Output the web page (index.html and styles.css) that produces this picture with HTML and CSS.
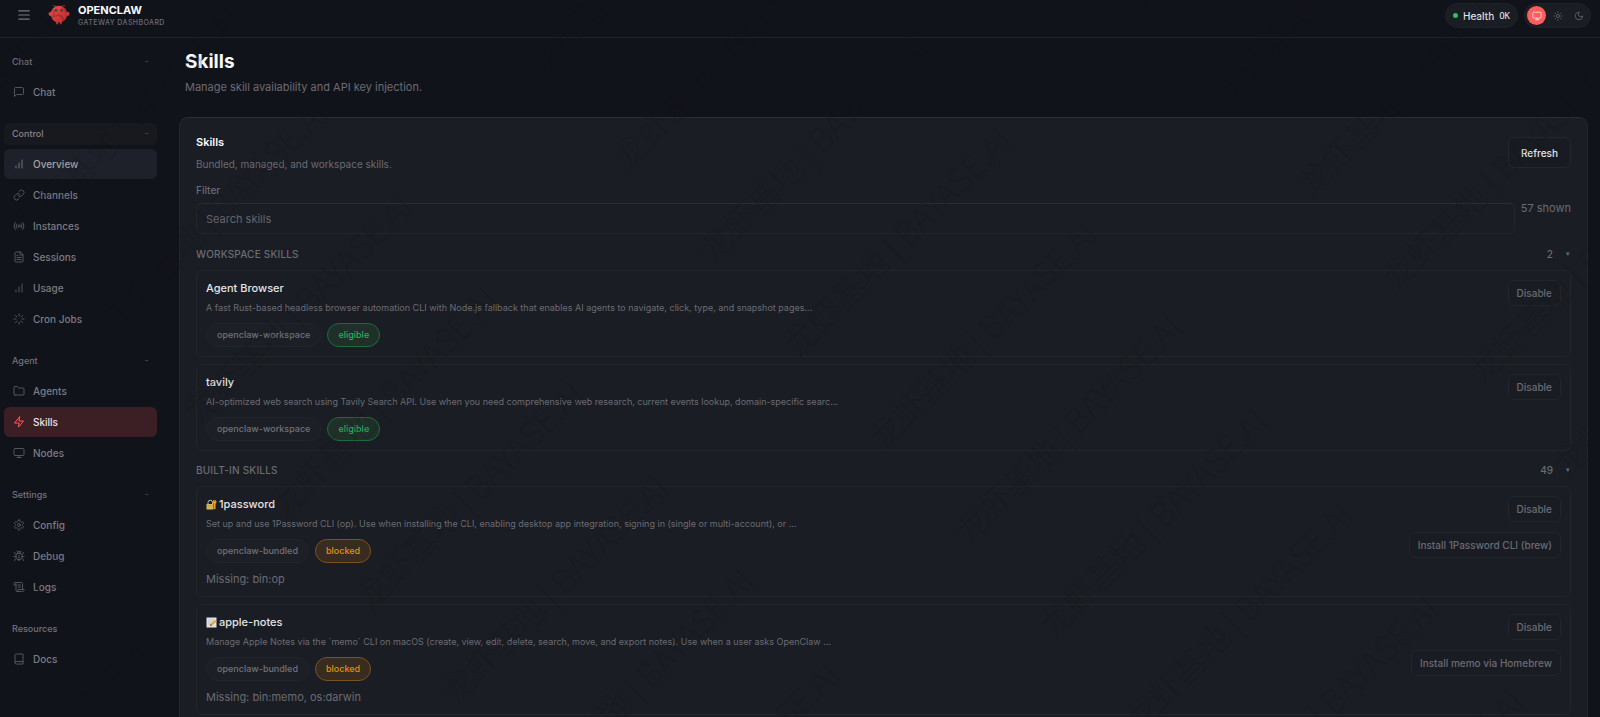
FILE: index.html
```html
<!DOCTYPE html>
<html lang="en">
<head>
<meta charset="utf-8">
<meta name="viewport" content="width=device-width, initial-scale=1">
<title>OpenClaw Gateway Dashboard</title>
<link rel="stylesheet" href="styles.css">
</head>
<body>
<div class="shell">
  <header class="topbar">
    <button class="menu-btn" type="button" aria-label="Toggle menu">
      <svg class="icon" viewBox="0 0 24 24"><path d="M3 5h18M3 12h18M3 19h18"/></svg>
    </button>
    <div class="brand">
      <svg class="brand-logo" viewBox="0 0 120 120" aria-hidden="true">
        <defs><linearGradient id="body" x1="0" y1="0" x2="1" y2="1"><stop offset="0" stop-color="#f04a4a"/><stop offset="1" stop-color="#b52828"/></linearGradient></defs>
        <path fill="url(#body)" d="M60 10C30 10 15 35 15 55s15 40 30 45v10h10v-10s5 2 10 0v10h10v-10c15-5 30-25 30-45S90 10 60 10z"/>
        <path fill="#dc3f3f" d="M20 45C5 40 0 50 5 60s15 5 20-5c3-7 0-10-5-10zM100 45c15-5 20 5 15 15s-15 5-20-5c-3-7 0-10 5-10z"/>
        <path d="M45 15Q35 5 30 8M75 15Q85 5 90 8" stroke="#e04444" stroke-width="4" fill="none" stroke-linecap="round"/>
        <circle cx="45" cy="35" r="6" fill="#10131a"/><circle cx="75" cy="35" r="6" fill="#10131a"/>
        <circle cx="46" cy="34" r="3" fill="#1fb6a6"/><circle cx="76" cy="34" r="3" fill="#1fb6a6"/>
      </svg>
      <div class="brand-text">
        <div class="brand-title">OPENCLAW</div>
        <div class="brand-sub">GATEWAY DASHBOARD</div>
      </div>
    </div>
    <div class="status">
      <div class="health"><span class="dot"></span><span>Health</span><span class="mono">OK</span></div>
      <div class="theme">
        <button class="theme-btn active" type="button" aria-label="System theme"><svg class="icon" viewBox="0 0 24 24"><rect x="2" y="3" width="20" height="14" rx="2"/><path d="M8 21h8M12 17v4"/></svg></button>
        <button class="theme-btn" type="button" aria-label="Light theme"><svg class="icon" viewBox="0 0 24 24"><circle cx="12" cy="12" r="4"/><path d="M12 2v2M12 20v2M4.9 4.9l1.4 1.4M17.7 17.7l1.4 1.4M2 12h2M20 12h2M6.3 17.7l-1.4 1.4M19.1 4.9l-1.4 1.4"/></svg></button>
        <button class="theme-btn" type="button" aria-label="Dark theme"><svg class="icon" viewBox="0 0 24 24"><path d="M12 3a6 6 0 0 0 9 9 9 9 0 1 1-9-9z"/></svg></button>
      </div>
    </div>
  </header>

  <nav class="nav">
    <section class="nav-group">
      <button class="nav-label" type="button"><span>Chat</span><span class="nav-dash">−</span></button>
      <a class="nav-item" href="#chat"><svg class="icon" viewBox="0 0 24 24"><path d="M21 15a2 2 0 0 1-2 2H7l-4 4V5a2 2 0 0 1 2-2h14a2 2 0 0 1 2 2z"/></svg>Chat</a>
    </section>
    <section class="nav-group">
      <button class="nav-label hover" type="button"><span>Control</span><span class="nav-dash">−</span></button>
      <a class="nav-item hover" href="#overview"><svg class="icon" viewBox="0 0 24 24"><path d="M12 20V10M18 20V4M6 20v-4"/></svg>Overview</a>
      <a class="nav-item" href="#channels"><svg class="icon" viewBox="0 0 24 24"><path d="M10 13a5 5 0 0 0 7.54.54l3-3a5 5 0 0 0-7.07-7.07l-1.72 1.71"/><path d="M14 11a5 5 0 0 0-7.54-.54l-3 3a5 5 0 0 0 7.07 7.07l1.71-1.71"/></svg>Channels</a>
      <a class="nav-item" href="#instances"><svg class="icon" viewBox="0 0 24 24"><circle cx="12" cy="12" r="2"/><path d="M16.24 7.76a6 6 0 0 1 0 8.49M7.76 16.24a6 6 0 0 1 0-8.49M19.07 4.93a10 10 0 0 1 0 14.14M4.93 19.07a10 10 0 0 1 0-14.14"/></svg>Instances</a>
      <a class="nav-item" href="#sessions"><svg class="icon" viewBox="0 0 24 24"><path d="M14.5 2H6a2 2 0 0 0-2 2v16a2 2 0 0 0 2 2h12a2 2 0 0 0 2-2V7.5z"/><path d="M14 2v6h6M16 13H8M16 17H8M10 9H8"/></svg>Sessions</a>
      <a class="nav-item" href="#usage"><svg class="icon" viewBox="0 0 24 24"><path d="M12 20V10M18 20V4M6 20v-4"/></svg>Usage</a>
      <a class="nav-item" href="#cron"><svg class="icon" viewBox="0 0 24 24"><path d="M12 2v4M12 18v4M4.93 4.93l2.83 2.83M16.24 16.24l2.83 2.83M2 12h4M18 12h4M4.93 19.07l2.83-2.83M16.24 7.76l2.83-2.83"/></svg>Cron Jobs</a>
    </section>
    <section class="nav-group">
      <button class="nav-label" type="button"><span>Agent</span><span class="nav-dash">−</span></button>
      <a class="nav-item" href="#agents"><svg class="icon" viewBox="0 0 24 24"><path d="M4 20h16a2 2 0 0 0 2-2V8a2 2 0 0 0-2-2h-7.93a2 2 0 0 1-1.66-.9l-.82-1.2A2 2 0 0 0 7.93 3H4a2 2 0 0 0-2 2v13a2 2 0 0 0 2 2z"/></svg>Agents</a>
      <a class="nav-item active" href="#skills"><svg class="icon" viewBox="0 0 24 24"><path d="M13 2 3 14h9l-1 8 10-12h-9l1-8z"/></svg>Skills</a>
      <a class="nav-item" href="#nodes"><svg class="icon" viewBox="0 0 24 24"><rect x="2" y="3" width="20" height="14" rx="2"/><path d="M8 21h8M12 17v4"/></svg>Nodes</a>
    </section>
    <section class="nav-group">
      <button class="nav-label" type="button"><span>Settings</span><span class="nav-dash">−</span></button>
      <a class="nav-item" href="#config"><svg class="icon" viewBox="0 0 24 24"><path d="M12.22 2h-.44a2 2 0 0 0-2 2v.18a2 2 0 0 1-1 1.73l-.43.25a2 2 0 0 1-2 0l-.15-.08a2 2 0 0 0-2.73.73l-.22.38a2 2 0 0 0 .73 2.73l.15.1a2 2 0 0 1 1 1.72v.51a2 2 0 0 1-1 1.74l-.15.09a2 2 0 0 0-.73 2.73l.22.38a2 2 0 0 0 2.73.73l.15-.08a2 2 0 0 1 2 0l.43.25a2 2 0 0 1 1 1.73V20a2 2 0 0 0 2 2h.44a2 2 0 0 0 2-2v-.18a2 2 0 0 1 1-1.73l.43-.25a2 2 0 0 1 2 0l.15.08a2 2 0 0 0 2.73-.73l.22-.39a2 2 0 0 0-.73-2.73l-.15-.08a2 2 0 0 1-1-1.74v-.5a2 2 0 0 1 1-1.74l.15-.09a2 2 0 0 0 .73-2.73l-.22-.38a2 2 0 0 0-2.73-.73l-.15.08a2 2 0 0 1-2 0l-.43-.25a2 2 0 0 1-1-1.73V4a2 2 0 0 0-2-2z"/><circle cx="12" cy="12" r="3"/></svg>Config</a>
      <a class="nav-item" href="#debug"><svg class="icon" viewBox="0 0 24 24"><path d="m8 2 1.88 1.88M14.12 3.88 16 2M9 7.13v-1a3 3 0 1 1 6 0v1"/><path d="M12 20c-3.3 0-6-2.7-6-6v-3a4 4 0 0 1 4-4h4a4 4 0 0 1 4 4v3c0 3.3-2.7 6-6 6zM12 20v-9M6.53 9C4.6 8.8 3 7.1 3 5M6 13H2M3 21c0-2.1 1.7-3.9 3.8-4M20.97 5c0 2.1-1.6 3.8-3.5 4M22 13h-4M17.2 17c2.1.1 3.8 1.9 3.8 4"/></svg>Debug</a>
      <a class="nav-item" href="#logs"><svg class="icon" viewBox="0 0 24 24"><path d="M8 21h12a2 2 0 0 0 2-2v-2H10v2a2 2 0 1 1-4 0V5a2 2 0 1 0-4 0v3h4"/><path d="M19 17V5a2 2 0 0 0-2-2H4M15 8h-5M15 12h-5"/></svg>Logs</a>
    </section>
    <section class="nav-group">
      <div class="nav-label"><span>Resources</span></div>
      <a class="nav-item" href="#docs"><svg class="icon" viewBox="0 0 24 24"><path d="M4 19.5v-15A2.5 2.5 0 0 1 6.5 2H20v20H6.5a2.5 2.5 0 0 1 0-5H20"/></svg>Docs</a>
    </section>
  </nav>

  <main class="content">
    <div class="page-head">
      <h1>Skills</h1>
      <p>Manage skill availability and API key injection.</p>
    </div>
    <section class="card">
      <div class="card-head">
        <div>
          <h2>Skills</h2>
          <p>Bundled, managed, and workspace skills.</p>
        </div>
        <button class="btn" type="button">Refresh</button>
      </div>
      <div class="filters">
        <label class="field"><span>Filter</span><input type="text" placeholder="Search skills"></label>
        <span class="count">57 shown</span>
      </div>

      <details class="group" open>
        <summary><span class="group-name">WORKSPACE SKILLS</span><span>2</span><span class="caret">▾</span></summary>
        <div class="list">
          <article class="item">
            <div class="item-main">
              <h3>Agent Browser</h3>
              <p class="desc">A fast Rust-based headless browser automation CLI with Node.js fallback that enables AI agents to navigate, click, type, and snapshot pages…</p>
              <div class="chips"><span class="chip">openclaw-workspace</span><span class="chip ok">eligible</span></div>
            </div>
            <div class="actions"><button class="btn small" type="button">Disable</button></div>
          </article>
          <article class="item">
            <div class="item-main">
              <h3>tavily</h3>
              <p class="desc">AI-optimized web search using Tavily Search API. Use when you need comprehensive web research, current events lookup, domain-specific searc…</p>
              <div class="chips"><span class="chip">openclaw-workspace</span><span class="chip ok">eligible</span></div>
            </div>
            <div class="actions"><button class="btn small" type="button">Disable</button></div>
          </article>
        </div>
      </details>

      <details class="group" open>
        <summary><span class="group-name">BUILT-IN SKILLS</span><span>49</span><span class="caret">▾</span></summary>
        <div class="list">
          <article class="item">
            <div class="item-main">
              <h3><svg class="emoji" viewBox="0 0 22 22" aria-hidden="true"><path d="M4 11V7a4 4 0 0 1 9 0v4" fill="none" stroke="#b9bcc0" stroke-width="2"/><rect x="1" y="10" width="14" height="11" rx="1" fill="#d9b860"/><path d="M1 13h14M1 16h14" stroke="#b5934a"/><circle cx="17" cy="6" r="4" fill="#f5a01d"/><circle cx="17" cy="4" r="1" fill="#4a3208"/><path d="M16 9h3v11l-2 1-1-2z" fill="#f5a01d"/></svg>1password</h3>
              <p class="desc">Set up and use 1Password CLI (op). Use when installing the CLI, enabling desktop app integration, signing in (single or multi-account), or …</p>
              <div class="chips"><span class="chip">openclaw-bundled</span><span class="chip warn">blocked</span></div>
              <p class="missing">Missing: bin:op</p>
            </div>
            <div class="actions"><button class="btn small" type="button">Disable</button><button class="btn small" type="button">Install 1Password CLI (brew)</button></div>
          </article>
          <article class="item">
            <div class="item-main">
              <h3><svg class="emoji" viewBox="0 0 22 22" aria-hidden="true"><path d="M1 1h20v20H1z" fill="#dfe1e4"/><path d="M4 6h13M4 10h9M4 14h6" stroke="#a8acb2"/><path d="M8 18l1-4L18 6l3 3-9 8z" fill="#f0a030"/><path d="M8 18l1-4 3 3z" fill="#6b5237"/></svg>apple-notes</h3>
              <p class="desc">Manage Apple Notes via the `memo` CLI on macOS (create, view, edit, delete, search, move, and export notes). Use when a user asks OpenClaw …</p>
              <div class="chips"><span class="chip">openclaw-bundled</span><span class="chip warn">blocked</span></div>
              <p class="missing">Missing: bin:memo, os:darwin</p>
            </div>
            <div class="actions"><button class="btn small" type="button">Disable</button><button class="btn small" type="button">Install memo via Homebrew</button></div>
          </article>
        </div>
      </details>
    </section>
  </main>
</div>
<svg class="watermark" id="watermark" aria-hidden="true"></svg>
<script src="watermark.js"></script>
</body>
</html>
```
FILE: watermark.js
```js
// Tiles the diagonal watermark over the whole window on a slanted grid.
const layer = document.getElementById("watermark");
const NS = "http://www.w3.org/2000/svg";
const origin = { x: 29, y: 238 };
for (let col = -1; col < 4; col++) {
  for (let row = -26; row < 16; row++) {
    const x = origin.x + col * 684 + row * 85.3;
    const y = origin.y + col * 27 + row * 93.6;
    if (x < -220 || x > innerWidth || y < 0 || y > innerHeight + 220) continue;
    const t = document.createElementNS(NS, "text");
    t.setAttribute("transform", `translate(${x} ${y}) rotate(-45)`);
    t.textContent = "龙虾基地 | BAYASE.AI";
    layer.appendChild(t);
  }
}
```
FILE: styles.css
```css
:root {
  --bg: #11131b;
  --card: #1a1d24;
  --line: #242528;
  --text: #e4e4e7;
  --strong: #fafafa;
  --muted: #6b6b72;
  --accent: #ff5c5c;
  --ok: #22b357;
  --warn: #e0930f;
}

* { box-sizing: border-box; }

body {
  margin: 0;
  background: var(--bg);
  color: var(--text);
  font-family: Inter, "Liberation Sans", sans-serif;
  font-size: 11px;
  line-height: 16px;
}

h1, h2, h3, p { margin: 0; }
button, input { font: inherit; color: inherit; }
button { cursor: pointer; }

.icon {
  width: 12px;
  height: 12px;
  flex: none;
  fill: none;
  stroke: currentColor;
  stroke-width: 2;
  stroke-linecap: round;
  stroke-linejoin: round;
}

.shell {
  display: grid;
  grid-template: auto 1fr / 168px 1fr;
  height: 100vh;
  overflow: hidden;
}

.topbar {
  grid-column: 1 / -1;
  display: flex;
  align-items: flex-start;
  height: 38px;
  padding: 3px 9px 0 15px;
  border-bottom: 1px solid #202225;
}

.menu-btn {
  display: flex;
  padding: 3px 2px;
  margin: 2px 15px 0 0;
  border: 0;
  background: none;
  color: #77777e;
}
.menu-btn .icon { width: 14px; height: 14px; }

.brand { display: flex; gap: 8px; }
.brand-logo { width: 22px; height: 22px; margin-top: 1px; }
.brand-title {
  color: var(--strong);
  font-size: 11px;
  font-weight: 700;
  line-height: 15px;
}
.brand-sub {
  color: var(--muted);
  font-size: 7px;
  font-weight: 500;
  line-height: 10px;
  letter-spacing: 0.06em;
}

.status { display: flex; gap: 6px; margin-left: auto; }
.health, .theme {
  display: flex;
  align-items: center;
  height: 25px;
  border: 1px solid #202226;
  border-radius: 13px;
  background: #1a1d23;
}
.health { gap: 5px; padding: 0 7px; font-size: 10px; font-weight: 500; }
.dot { width: 5px; height: 5px; border-radius: 50%; background: #22c55e; }
.mono { font-family: "DejaVu Sans Mono", monospace; font-size: 9px; }
.theme { gap: 2px; padding: 0 2px; }
.theme-btn {
  display: flex;
  align-items: center;
  justify-content: center;
  width: 19px;
  height: 19px;
  padding: 0;
  border: 0;
  border-radius: 50%;
  background: none;
  color: #66666d;
}
.theme-btn .icon { width: 10px; height: 10px; }
.theme-btn.active { background: var(--accent); color: #ffe3e3; }

.nav { padding: 13px 11px 0 4px; }
.nav-group { display: flex; flex-direction: column; gap: 1px; margin-bottom: 16px; }
.nav-label {
  display: flex;
  align-items: center;
  justify-content: space-between;
  height: 22px;
  margin-bottom: 3px;
  padding: 0 8px;
  border: 0;
  border-radius: 5px;
  background: none;
  color: #72727a;
  font-size: 9px;
  font-weight: 500;
}
.nav-label.hover { background: #18181f; color: #85858c; }
.nav-dash { color: #4c4c53; font-size: 7px; }
.nav-item {
  display: flex;
  align-items: center;
  gap: 8px;
  height: 30px;
  padding: 0 9px;
  border-radius: 6px;
  color: #7b7b83;
  font-size: 10px;
  font-weight: 500;
  text-decoration: none;
}
.nav-item .icon { color: #54555c; }
.nav-item.hover { background: #1e2129; color: #a3a3aa; }
.nav-item.hover .icon { color: #75757d; }
.nav-item.active { background: #3c1f25; color: #e8e4e6; }
.nav-item.active .icon { color: var(--accent); }

.content { padding: 12px 12px 0 11px; min-width: 0; }
.page-head { padding: 0 6px; margin-bottom: 22px; }
.page-head h1 { color: var(--strong); font-size: 19px; font-weight: 700; line-height: 24px; }
.page-head p { margin-top: 5px; color: var(--muted); line-height: 16px; }

.card {
  padding: 16px;
  border: 1px solid #242628;
  border-top-color: #2c2e31;
  border-radius: 9px;
  background: var(--card);
}
.card-head { display: flex; align-items: flex-start; justify-content: space-between; }
.card-head h2 { color: var(--strong); font-size: 11px; font-weight: 600; }
.card-head p { margin-top: 6px; color: var(--muted); font-size: 10px; }
.card-head .btn { margin-top: 3px; }

.btn {
  height: 31px;
  padding: 0 12px;
  border: 1px solid #25272b;
  border-radius: 6px;
  background: #191b23;
  color: var(--text);
  font-size: 10px;
  font-weight: 500;
}
.btn.small { height: 26px; padding: 0 8px; border-color: #232529; background: #1a1c23; color: var(--muted); }

.filters { display: flex; gap: 6px; align-items: center; margin-top: 10px; }
.field { flex: 1; display: flex; flex-direction: column; gap: 5px; color: var(--muted); font-size: 10px; font-weight: 500; }
.field input {
  height: 31px;
  padding: 0 9px;
  border: 1px solid var(--line);
  border-top-color: #2c2d2f;
  border-radius: 6px;
  background: var(--card);
  color: var(--text);
  font-size: 11px;
  font-weight: 400;
}
.field input::placeholder { color: #65656c; opacity: 1; }
.count { color: var(--muted); }

.group { margin-top: 12px; }
.group + .group { margin-top: 11px; }
.group summary {
  display: flex;
  align-items: center;
  height: 16px;
  margin-bottom: 8px;
  color: var(--muted);
  font-size: 10px;
  font-weight: 500;
  list-style: none;
}
.group-name { flex: 1; letter-spacing: 0.02em; font-weight: 500; }
.caret { width: 18px; padding-right: 1px; font-size: 7px; text-align: right; }
.list { display: flex; flex-direction: column; gap: 7px; }

.item {
  display: flex;
  justify-content: space-between;
  gap: 12px;
  padding: 9px;
  border: 1px solid var(--line);
  border-radius: 6px;
}
.item-main { min-width: 0; }
.item h3 {
  display: flex;
  align-items: center;
  gap: 2px;
  color: var(--text);
  font-size: 11px;
  font-weight: 500;
  line-height: 16px;
}
.emoji { width: 11px; height: 11px; flex: none; }
.desc { margin-top: 5px; color: var(--muted); font-size: 9px; line-height: 14px; }
.chips { display: flex; gap: 6px; margin-top: 8px; }
.chip {
  height: 24px;
  padding: 0 10px;
  border: 1px solid #222429;
  border-radius: 12px;
  background: #1c1f26;
  color: #72727a;
  font-size: 9px;
  font-weight: 500;
  line-height: 22px;
}
.chip.ok { border-color: #1d6b3c; background: #1e3029; color: var(--ok); }
.chip.warn { border-color: #7a5220; background: #382c20; color: var(--warn); }
.missing { margin-top: 8px; color: var(--muted); }
.actions { display: flex; flex-direction: column; align-items: flex-end; gap: 10px; }

.watermark {
  position: fixed;
  inset: 0;
  width: 100%;
  height: 100%;
  pointer-events: none;
}
.watermark text {
  fill: #16130f;
  fill-opacity: 0.2;
  font-family: "Noto Sans CJK SC", sans-serif;
  font-size: 33px;
  font-weight: 300;
}
```
